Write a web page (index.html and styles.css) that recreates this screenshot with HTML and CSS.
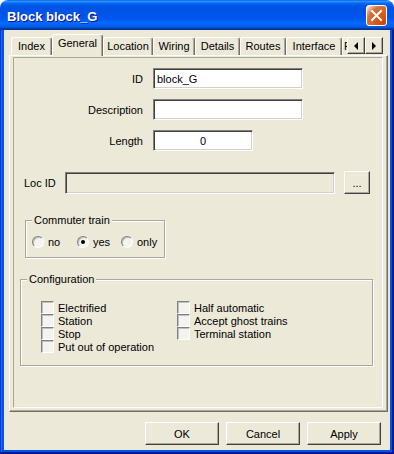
FILE: index.html
```html
<!DOCTYPE html>
<html lang="en">
  <head>
    <meta charset="UTF-8" />
    <title>Block block_G</title>
    <link rel="stylesheet" href="styles.css">
  </head>
  <body>
    <div class="window">
      <!-- Title bar -->
      <div class="titlebar">
        <span class="title">Block block_G</span>
        <button class="close" title="Close">
          <svg width="13" height="13" viewBox="0 0 13 13">
            <path d="M2 2 L11 11 M11 2 L2 11" stroke="#fff" stroke-width="2" stroke-linecap="square" />
          </svg>
        </button>
      </div>

      <div class="frame">
        <div class="body">
          <!-- Tab strip -->
          <div class="tabs">
            <div class="tab tab-index">Index</div>
            <div class="tab tab-general active">General</div>
            <div class="tab tab-location">Location</div>
            <div class="tab tab-wiring">Wiring</div>
            <div class="tab tab-details">Details</div>
            <div class="tab tab-routes">Routes</div>
            <div class="tab tab-interface">Interface</div>
            <div class="tab tab-cut">Permissions</div>
            <div class="spin">
              <button class="spin-btn"><span class="arrow left"></span></button>
              <button class="spin-btn"><span class="arrow right"></span></button>
            </div>
          </div>

          <div class="pane">
            <div class="sheet">
              <div class="fields">
                <label class="lbl">ID</label>
                <input class="field" type="text" value="block_G" />
                <label class="lbl">Description</label>
                <input class="field" type="text" value="" />
                <label class="lbl">Length</label>
                <input class="field short" type="text" value="0" />
              </div>

              <div class="loc">
                <label class="loc-label">Loc ID</label>
                <input class="field wide" type="text" value="" disabled />
                <button class="btn dots">...</button>
              </div>

              <!-- Commuter train -->
              <fieldset class="group commuter">
                <legend>Commuter train</legend>
                <div class="radios">
                  <span class="radio r-no"><span class="circle"></span>no</span>
                  <span class="radio r-yes"><span class="circle checked"></span>yes</span>
                  <span class="radio"><span class="circle"></span>only</span>
                </div>
              </fieldset>

              <!-- Configuration -->
              <fieldset class="group config">
                <legend>Configuration</legend>
                <div class="checks">
                  <div class="check-col first">
                    <span class="check"><span class="box"></span>Electrified</span>
                    <span class="check"><span class="box"></span>Station</span>
                    <span class="check"><span class="box"></span>Stop</span>
                    <span class="check"><span class="box"></span>Put out of operation</span>
                  </div>
                  <div class="check-col">
                    <span class="check"><span class="box"></span>Half automatic</span>
                    <span class="check"><span class="box"></span>Accept ghost trains</span>
                    <span class="check"><span class="box"></span>Terminal station</span>
                  </div>
                </div>
              </fieldset>
            </div>
          </div>

          <!-- Dialog buttons -->
          <div class="actions">
            <button class="btn">OK</button>
            <button class="btn">Cancel</button>
            <button class="btn">Apply</button>
          </div>
        </div>
      </div>
    </div>
  </body>
</html>
```

FILE: styles.css
```css
body {
  margin: 0;
  font-family: "Liberation Sans", Arial, sans-serif;
  font-size: 11px;
  color: #000;
  background: #fff;
}

/* Window shell */
.window {
  width: 394px;
  height: 454px;
  display: flex;
  flex-direction: column;
  border-radius: 8px 8px 0 0;
  overflow: hidden;
}

.titlebar {
  height: 30px;
  flex-shrink: 0;
  display: flex;
  align-items: center;
  justify-content: space-between;
  padding: 0 7px 0 7px;
  background: linear-gradient(
    to bottom,
    #0058ee 0%,
    #3593ff 4%,
    #288eff 6%,
    #127dff 8%,
    #036ffc 10%,
    #0262ee 14%,
    #0057e5 20%,
    #0054e3 24%,
    #0055eb 56%,
    #005bf5 66%,
    #026afe 76%,
    #0062ef 86%,
    #0052d6 92%,
    #0040ab 94%,
    #003092 100%
  );
}

.title {
  color: #fff;
  font-weight: bold;
  font-size: 13px;
  padding-top: 2px;
  text-shadow: 1px 1px #0f1089;
}

.close {
  width: 21px;
  height: 21px;
  padding: 0;
  display: flex;
  align-items: center;
  justify-content: center;
  border: 1px solid #fff;
  border-radius: 3px;
  background: radial-gradient(
    circle at 90% 90%,
    #cc4600 0%,
    #dc6527 55%,
    #cd7546 70%,
    #ffccb2 90%,
    #fff 100%
  );
}

.frame {
  flex: 1;
  display: flex;
  padding: 0 4px 4px;
  background: #0054e3;
  box-shadow: inset -1px -1px #00138c, inset 1px 0 #0831d9,
    inset -2px -2px #001ea0, inset 2px 0 #166aee;
}

.body {
  flex: 1;
  background: #ece9d8;
  padding-top: 4px;
}

/* Tabs */
.tabs {
  display: flex;
  align-items: flex-end;
  height: 21px;
  margin-left: 7px;
}

.tab {
  box-sizing: border-box;
  height: 18px;
  line-height: 16px;
  text-align: center;
  white-space: nowrap;
  overflow: hidden;
  border: 1px solid #fff;
  border-right-color: #716f64;
  border-bottom: none;
  border-radius: 3px 3px 0 0;
  box-shadow: inset -1px 0 #aca899;
}

.tab.active {
  height: 22px;
  line-height: 17px;
  margin-bottom: -1px;
  position: relative;
  z-index: 1;
  background: #ece9d8;
}

.tab-index { width: 41px; }
.tab-general { width: 51px; }
.tab-location { width: 50px; }
.tab-wiring { width: 42px; }
.tab-details { width: 45px; }
.tab-routes { width: 46px; }
.tab-interface { width: 56px; }
.tab-cut {
  width: 5px;
  text-align: left;
  padding-left: 1px;
  border-right: none;
  box-shadow: none;
}

.spin {
  display: flex;
  margin-bottom: 1px;
}

.spin-btn {
  width: 18px;
  height: 17px;
  padding: 0;
  display: flex;
  align-items: center;
  justify-content: center;
  background: #ece9d8;
  border: 1px solid;
  border-color: #fff #404040 #404040 #fff;
  box-shadow: inset -1px -1px #aca899;
}

.arrow {
  width: 0;
  height: 0;
  border-top: 4px solid transparent;
  border-bottom: 4px solid transparent;
}

.arrow.left {
  border-right: 4px solid #000;
}

.arrow.right {
  border-left: 4px solid #000;
}

/* Tab pane */
.pane {
  box-sizing: border-box;
  width: 379px;
  height: 357px;
  margin-left: 5px;
  padding: 1px 4px 3px 3px;
  border: 1px solid;
  border-color: #fff #716f64 #716f64 #fff;
  box-shadow: inset -1px -1px #aca899;
}

.sheet {
  box-sizing: border-box;
  height: 100%;
  border: 1px solid;
  border-color: #aca899 #fff #fff #aca899;
}

/* Text fields */
.fields {
  display: grid;
  grid-template-columns: 129px auto;
  grid-auto-rows: 21px;
  column-gap: 10px;
  row-gap: 10px;
  align-items: center;
  justify-items: start;
  margin-top: 10px;
}

.lbl {
  justify-self: end;
}

.field {
  box-sizing: border-box;
  width: 150px;
  height: 21px;
  margin: 0;
  padding: 0 3px;
  font: inherit;
  color: #000;
  background: #fff;
  border: 1px solid;
  border-color: #808080 #fff #fff #808080;
  box-shadow: inset 1px 1px #404040, inset -1px -1px #d4d0c8;
  outline: none;
}

.field.short {
  width: 100px;
  text-align: center;
}

.loc {
  display: flex;
  align-items: center;
  height: 23px;
  margin-top: 20px;
  padding-left: 10px;
}

.loc-label {
  width: 41px;
}

.field.wide {
  width: 270px;
  height: 22px;
  background: #ece9d8;
}

/* Buttons */
.btn {
  box-sizing: border-box;
  width: 74px;
  height: 23px;
  padding: 0;
  font: inherit;
  color: #000;
  background: #ece9d8;
  border: 1px solid;
  border-color: #fff #404040 #404040 #fff;
  box-shadow: inset -1px -1px #aca899;
}

.btn.dots {
  width: 26px;
  margin-left: 9px;
}

.actions {
  display: flex;
  justify-content: flex-end;
  gap: 7px;
  margin-top: 10px;
  padding-right: 9px;
}

/* Group boxes */
.group {
  box-sizing: border-box;
  margin: 0;
  border: 1px solid #aca899;
  box-shadow: inset 1px 1px #fff, 1px 1px #fff;
}

.group legend {
  padding: 0 2px;
  line-height: 13px;
  background: #ece9d8;
}

.commuter {
  width: 140px;
  margin: 20px 0 0 11px;
  padding: 8px 6px 9px;
}

.radios {
  display: flex;
  height: 13px;
}

.radio {
  display: inline-flex;
  align-items: center;
  gap: 4px;
}

.r-no { width: 45px; }
.r-yes { width: 44px; }

.circle {
  box-sizing: border-box;
  width: 12px;
  height: 12px;
  border-radius: 50%;
  border: 1px solid;
  border-color: #808080 #fff #fff #808080;
  background: #f4f3ee;
  box-shadow: inset 1px 1px #c0c0c0;
  display: flex;
  align-items: center;
  justify-content: center;
}

.circle.checked::after {
  content: "";
  width: 4px;
  height: 4px;
  border-radius: 50%;
  background: #000;
}

.config {
  width: 353px;
  margin: 15px 0 0 6px;
  padding: 15px 6px 12px;
}

.checks {
  display: flex;
  padding-left: 14px;
}

.check-col {
  display: flex;
  flex-direction: column;
}

.check-col.first {
  width: 136px;
}

.check {
  display: flex;
  align-items: center;
  gap: 4px;
  height: 13px;
}

.box {
  box-sizing: border-box;
  width: 13px;
  height: 13px;
  border: 1px solid;
  border-color: #808080 #fff #fff #808080;
  background: #f4f3ee;
  box-shadow: inset 1px 1px #c0c0c0;
}
```
